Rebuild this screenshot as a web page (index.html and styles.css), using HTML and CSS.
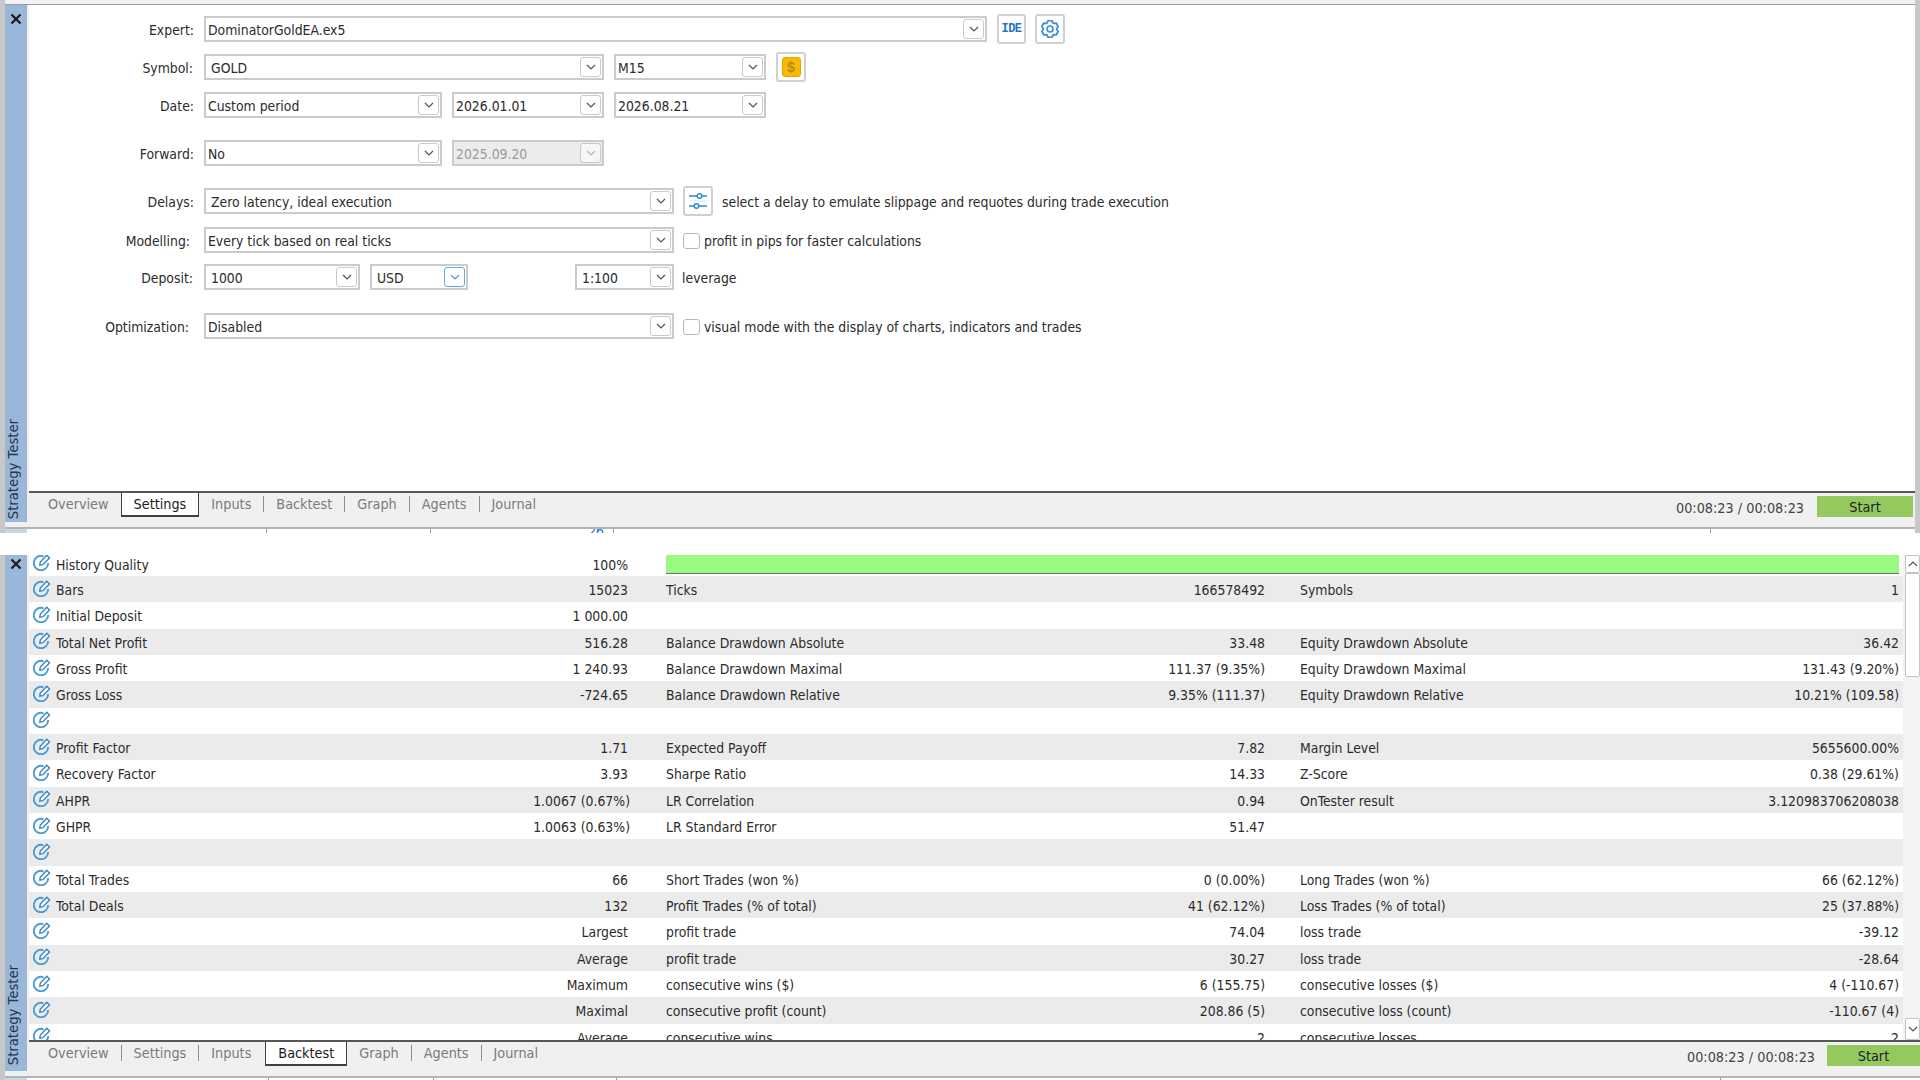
FILE: index.html
```html
<!DOCTYPE html>
<html lang="en">
<head>
    <meta charset="UTF-8">
    <title>Strategy Tester</title>
    <link rel="stylesheet" href="styles.css">
</head>
<body>

    <!-- Shared icons -->
    <svg class="icon-defs" width="0" height="0">
        <symbol id="chevron" viewBox="0 0 10 6"><path d="M1 1l4 4 4-4" fill="none" stroke="currentColor" stroke-width="1.2"/></symbol>
        <symbol id="close" viewBox="0 0 12 12"><path d="M1.5 1.5l9 9M10.5 1.5l-9 9" fill="none" stroke="#1a1a1a" stroke-width="2.2"/></symbol>
        <symbol id="edit" viewBox="0 0 18 18">
            <path d="M10.5 3.3A7.2 7.2 0 1 0 15.2 10" fill="none" stroke="#4a9ad6" stroke-width="1.9"/>
            <path d="M6.8 12.2l.5-3.2L13.8 2.2l2.7 2.7-6.6 6.8z" fill="#fff" stroke="#3585c6" stroke-width="1.4"/>
        </symbol>
    </svg>

    <!-- Settings panel -->
    <section class="tester tester-top">
        <div class="top-strip"></div>
        <div class="tester-body">
            <div class="side">
                <div class="side-blue">
                    <svg class="close-icon"><use href="#close"/></svg>
                    <span class="side-title">Strategy Tester</span>
                </div>
            </div>
            <div class="content">
                <div class="form">
                    <div class="form-row">
                        <label class="form-label">Expert:</label>
                        <div class="combo w-expert"><span>DominatorGoldEA.ex5</span><i class="combo-btn"><svg><use href="#chevron"/></svg></i></div>
                        <button class="tool-btn tool-ide">IDE</button>
                        <button class="tool-btn tool-gear">
                            <svg width="18" height="18" viewBox="0 0 18 18"><path d="M7.09.72h3.82l1.34 2.65 2.96-.17 1.92 3.32L15.5 9l1.63 2.48-1.92 3.32-2.96-.17-1.34 2.65H7.09l-1.34-2.65-2.96.17-1.92-3.32L2.5 9 .87 6.52 2.79 3.2l2.96.17z" fill="#fff" stroke="#3f8fd2" stroke-width="1.8"/><circle cx="9" cy="9" r="3" fill="none" stroke="#3f8fd2" stroke-width="1.7"/></svg>
                        </button>
                    </div>
                    <div class="form-row">
                        <label class="form-label label-in-1">Symbol:</label>
                        <div class="combo combo-edit w-400"><span>GOLD</span><i class="combo-btn"><svg><use href="#chevron"/></svg></i></div>
                        <div class="combo w-152"><span>M15</span><i class="combo-btn"><svg><use href="#chevron"/></svg></i></div>
                        <button class="tool-btn tool-gold"><span class="gold-coin">$</span></button>
                    </div>
                    <div class="form-row">
                        <label class="form-label">Date:</label>
                        <div class="combo w-238"><span>Custom period</span><i class="combo-btn"><svg><use href="#chevron"/></svg></i></div>
                        <div class="combo w-152"><span>2026.01.01</span><i class="combo-btn"><svg><use href="#chevron"/></svg></i></div>
                        <div class="combo w-152"><span>2026.08.21</span><i class="combo-btn"><svg><use href="#chevron"/></svg></i></div>
                    </div>
                    <div class="form-row form-row-spaced">
                        <label class="form-label">Forward:</label>
                        <div class="combo w-238"><span>No</span><i class="combo-btn"><svg><use href="#chevron"/></svg></i></div>
                        <div class="combo combo-disabled w-152"><span>2025.09.20</span><i class="combo-btn"><svg><use href="#chevron"/></svg></i></div>
                    </div>
                    <div class="form-row form-row-spaced">
                        <label class="form-label">Delays:</label>
                        <div class="combo combo-edit w-470"><span>Zero latency, ideal execution</span><i class="combo-btn"><svg><use href="#chevron"/></svg></i></div>
                        <button class="tool-btn tool-delay">
                            <svg width="18" height="18" viewBox="0 0 18 18"><path d="M0 4h8M13 4h5M5 14H0M10 14h8" stroke="#2f8ad0" stroke-width="1.5"/><circle cx="10.5" cy="4" r="2.3" fill="#fff" stroke="#2f8ad0" stroke-width="1.5"/><circle cx="7.5" cy="14" r="2.3" fill="#fff" stroke="#2f8ad0" stroke-width="1.5"/><path d="M1 9h16" stroke="#cfe3f4"/></svg>
                        </button>
                        <span class="form-note">select a delay to emulate slippage and requotes during trade execution</span>
                    </div>
                    <div class="form-row form-row-modelling">
                        <label class="form-label label-in-4">Modelling:</label>
                        <div class="combo w-470"><span>Every tick based on real ticks</span><i class="combo-btn"><svg><use href="#chevron"/></svg></i></div>
                        <span class="check"><i class="check-box"></i>profit in pips for faster calculations</span>
                    </div>
                    <div class="form-row">
                        <label class="form-label label-in-1">Deposit:</label>
                        <div class="combo combo-edit w-156"><span>1000</span><i class="combo-btn"><svg><use href="#chevron"/></svg></i></div>
                        <div class="combo combo-usd combo-focus w-98"><span>USD</span><i class="combo-btn"><svg><use href="#chevron"/></svg></i></div>
                        <div class="combo combo-edit combo-leverage w-99"><span>1:100</span><i class="combo-btn"><svg><use href="#chevron"/></svg></i></div>
                        <span class="leverage-note">leverage</span>
                    </div>
                    <div class="form-row form-row-last">
                        <label class="form-label label-in-5">Optimization:</label>
                        <div class="combo w-470"><span>Disabled</span><i class="combo-btn"><svg><use href="#chevron"/></svg></i></div>
                        <span class="check"><i class="check-box"></i>visual mode with the display of charts, indicators and trades</span>
                    </div>
                </div>
                <div class="tabbar">
                    <div class="tabs">
                        <span class="tab">Overview</span>
                        <span class="tab tab-active">Settings</span>
                        <span class="tab">Inputs</span>
                        <i class="tab-sep"></i>
                        <span class="tab">Backtest</span>
                        <i class="tab-sep"></i>
                        <span class="tab">Graph</span>
                        <i class="tab-sep"></i>
                        <span class="tab">Agents</span>
                        <i class="tab-sep"></i>
                        <span class="tab">Journal</span>
                    </div>
                    <span class="timer">00:08:23 / 00:08:23</span>
                    <button class="start-btn">Start</button>
                </div>
            </div>
        </div>
        <div class="sliver">
            <i class="sliver-side"></i>
            <i class="sliver-cell"></i>
            <i class="sliver-cell"></i>
            <i class="sliver-cell"><b class="sliver-num">26</b></i>
            <i class="sliver-cell"></i>
        </div>
    </section>

    <!-- Backtest panel -->
    <section class="tester tester-bottom">
        <div class="tester-body">
            <div class="side">
                <div class="side-blue">
                    <svg class="close-icon"><use href="#close"/></svg>
                    <span class="side-title">Strategy Tester</span>
                </div>
            </div>
            <div class="content">
                <div class="report">
                    <div class="stats">
                        <div class="stat-row stat-row-first">
                            <svg class="edit-icon"><use href="#edit"/></svg>
                            <div class="cell"><span>History Quality</span><span>100%</span></div>
                            <div class="quality-wrap"><div class="quality-bar"></div></div>
                        </div>
                        <div class="stat-row">
                            <svg class="edit-icon"><use href="#edit"/></svg>
                            <div class="cell"><span>Bars</span><span>15023</span></div>
                            <div class="cell cell-2"><span>Ticks</span><span>166578492</span></div>
                            <div class="cell cell-3"><span>Symbols</span><span>1</span></div>
                        </div>
                        <div class="stat-row">
                            <svg class="edit-icon"><use href="#edit"/></svg>
                            <div class="cell"><span>Initial Deposit</span><span>1 000.00</span></div>
                        </div>
                        <div class="stat-row">
                            <svg class="edit-icon"><use href="#edit"/></svg>
                            <div class="cell"><span>Total Net Profit</span><span>516.28</span></div>
                            <div class="cell cell-2"><span>Balance Drawdown Absolute</span><span>33.48</span></div>
                            <div class="cell cell-3"><span>Equity Drawdown Absolute</span><span>36.42</span></div>
                        </div>
                        <div class="stat-row">
                            <svg class="edit-icon"><use href="#edit"/></svg>
                            <div class="cell"><span>Gross Profit</span><span>1 240.93</span></div>
                            <div class="cell cell-2"><span>Balance Drawdown Maximal</span><span>111.37 (9.35%)</span></div>
                            <div class="cell cell-3"><span>Equity Drawdown Maximal</span><span>131.43 (9.20%)</span></div>
                        </div>
                        <div class="stat-row">
                            <svg class="edit-icon"><use href="#edit"/></svg>
                            <div class="cell"><span>Gross Loss</span><span>-724.65</span></div>
                            <div class="cell cell-2"><span>Balance Drawdown Relative</span><span>9.35% (111.37)</span></div>
                            <div class="cell cell-3"><span>Equity Drawdown Relative</span><span>10.21% (109.58)</span></div>
                        </div>
                        <div class="stat-row">
                            <svg class="edit-icon"><use href="#edit"/></svg>
                        </div>
                        <div class="stat-row">
                            <svg class="edit-icon"><use href="#edit"/></svg>
                            <div class="cell"><span>Profit Factor</span><span>1.71</span></div>
                            <div class="cell cell-2"><span>Expected Payoff</span><span>7.82</span></div>
                            <div class="cell cell-3"><span>Margin Level</span><span>5655600.00%</span></div>
                        </div>
                        <div class="stat-row">
                            <svg class="edit-icon"><use href="#edit"/></svg>
                            <div class="cell"><span>Recovery Factor</span><span>3.93</span></div>
                            <div class="cell cell-2"><span>Sharpe Ratio</span><span>14.33</span></div>
                            <div class="cell cell-3"><span>Z-Score</span><span>0.38 (29.61%)</span></div>
                        </div>
                        <div class="stat-row">
                            <svg class="edit-icon"><use href="#edit"/></svg>
                            <div class="cell"><span>AHPR</span><span class="value-wide">1.0067 (0.67%)</span></div>
                            <div class="cell cell-2"><span>LR Correlation</span><span>0.94</span></div>
                            <div class="cell cell-3"><span>OnTester result</span><span>3.120983706208038</span></div>
                        </div>
                        <div class="stat-row">
                            <svg class="edit-icon"><use href="#edit"/></svg>
                            <div class="cell"><span>GHPR</span><span class="value-wide">1.0063 (0.63%)</span></div>
                            <div class="cell cell-2"><span>LR Standard Error</span><span>51.47</span></div>
                        </div>
                        <div class="stat-row">
                            <svg class="edit-icon"><use href="#edit"/></svg>
                        </div>
                        <div class="stat-row">
                            <svg class="edit-icon"><use href="#edit"/></svg>
                            <div class="cell"><span>Total Trades</span><span>66</span></div>
                            <div class="cell cell-2"><span>Short Trades (won %)</span><span>0 (0.00%)</span></div>
                            <div class="cell cell-3"><span>Long Trades (won %)</span><span>66 (62.12%)</span></div>
                        </div>
                        <div class="stat-row">
                            <svg class="edit-icon"><use href="#edit"/></svg>
                            <div class="cell"><span>Total Deals</span><span>132</span></div>
                            <div class="cell cell-2"><span>Profit Trades (% of total)</span><span>41 (62.12%)</span></div>
                            <div class="cell cell-3"><span>Loss Trades (% of total)</span><span>25 (37.88%)</span></div>
                        </div>
                        <div class="stat-row">
                            <svg class="edit-icon"><use href="#edit"/></svg>
                            <div class="cell"><span></span><span>Largest</span></div>
                            <div class="cell cell-2"><span>profit trade</span><span>74.04</span></div>
                            <div class="cell cell-3"><span>loss trade</span><span>-39.12</span></div>
                        </div>
                        <div class="stat-row">
                            <svg class="edit-icon"><use href="#edit"/></svg>
                            <div class="cell"><span></span><span>Average</span></div>
                            <div class="cell cell-2"><span>profit trade</span><span>30.27</span></div>
                            <div class="cell cell-3"><span>loss trade</span><span>-28.64</span></div>
                        </div>
                        <div class="stat-row">
                            <svg class="edit-icon"><use href="#edit"/></svg>
                            <div class="cell"><span></span><span>Maximum</span></div>
                            <div class="cell cell-2"><span>consecutive wins ($)</span><span>6 (155.75)</span></div>
                            <div class="cell cell-3"><span>consecutive losses ($)</span><span>4 (-110.67)</span></div>
                        </div>
                        <div class="stat-row">
                            <svg class="edit-icon"><use href="#edit"/></svg>
                            <div class="cell"><span></span><span>Maximal</span></div>
                            <div class="cell cell-2"><span>consecutive profit (count)</span><span>208.86 (5)</span></div>
                            <div class="cell cell-3"><span>consecutive loss (count)</span><span>-110.67 (4)</span></div>
                        </div>
                        <div class="stat-row">
                            <svg class="edit-icon"><use href="#edit"/></svg>
                            <div class="cell"><span></span><span>Average</span></div>
                            <div class="cell cell-2"><span>consecutive wins</span><span>2</span></div>
                            <div class="cell cell-3"><span>consecutive losses</span><span>2</span></div>
                        </div>
                    </div>
                    <div class="scrollbar">
                        <i class="scroll-btn scroll-up"><svg><use href="#chevron"/></svg></i>
                        <i class="scroll-thumb"></i>
                        <i class="scroll-track"></i>
                        <i class="scroll-btn scroll-down"><svg><use href="#chevron"/></svg></i>
                    </div>
                </div>
                <div class="tabbar">
                    <div class="tabs">
                        <span class="tab">Overview</span>
                        <i class="tab-sep"></i>
                        <span class="tab">Settings</span>
                        <i class="tab-sep"></i>
                        <span class="tab">Inputs</span>
                        <span class="tab tab-active">Backtest</span>
                        <span class="tab">Graph</span>
                        <i class="tab-sep"></i>
                        <span class="tab">Agents</span>
                        <i class="tab-sep"></i>
                        <span class="tab">Journal</span>
                    </div>
                    <span class="timer">00:08:23 / 00:08:23</span>
                    <button class="start-btn">Start</button>
                </div>
            </div>
        </div>
        <div class="sliver">
            <i class="sliver-side"></i>
            <i class="sliver-cell"></i>
            <i class="sliver-cell"></i>
            <i class="sliver-cell"></i>
            <i class="sliver-cell"></i>
        </div>
    </section>

</body>
</html>
```

FILE: styles.css
```css
body {
    margin: 0;
    height: 1080px;
    overflow: hidden;
    background-color: #ffffff;
    font-family: "DejaVu Sans Condensed", "DejaVu Sans", sans-serif;
    font-size: 13.85px;
    color: #2b2b2b;
}

.icon-defs {
    position: absolute;
}

i {
    font-style: normal;
}

/* Panels */
.tester {
    display: flex;
    flex-direction: column;
    border-left: 5px solid #c8c8c8;
}

.tester-top {
    height: 533px;
    border-right: 5px solid #c8c8c8;
}

.tester-bottom {
    height: 525px;
    margin-top: 22px;
}

.top-strip {
    height: 4px;
    background-color: #f2f2f2;
    border-bottom: 1px solid #9a9a9a;
}

.tester-body {
    flex: 1;
    display: flex;
    min-height: 0;
}

.side {
    width: 22px;
    flex-shrink: 0;
    display: flex;
    background-color: #f0f0f0;
    padding-bottom: 5px;
}

.side-blue {
    flex: 1;
    display: flex;
    flex-direction: column;
    align-items: center;
    justify-content: space-between;
    background-color: #9ab6d8;
    padding: 8px 0 3px;
}

.tester-bottom .side-blue {
    padding: 3px 0 6px;
}

.close-icon {
    width: 12px;
    height: 12px;
}

.side-title {
    writing-mode: vertical-rl;
    transform: rotate(180deg);
    margin-right: 5px;
    font-family: "DejaVu Sans", sans-serif;
    font-size: 13.2px;
    color: #24364d;
}

.content {
    flex: 1;
    min-width: 0;
    display: flex;
    flex-direction: column;
    border-left: 2px solid #f0f0f0;
}

/* Settings form */
.form {
    flex: 1;
    padding-top: 11px;
}

.form-row {
    display: flex;
    align-items: center;
    gap: 10px;
    height: 26px;
    margin-bottom: 12px;
}

.form-row-spaced {
    margin-top: 22px;
}

.form-row-modelling {
    margin-top: 13px;
    margin-bottom: 11px;
}

.form-row-last {
    margin-top: 23px;
}

.form-label {
    box-sizing: border-box;
    width: 165px;
    padding-top: 2px;
    text-align: right;
}

.label-in-1 { padding-right: 1px; }
.label-in-4 { padding-right: 4px; }
.label-in-5 { padding-right: 5px; }

.combo {
    box-sizing: border-box;
    display: flex;
    align-items: center;
    justify-content: space-between;
    height: 26px;
    padding-left: 2px;
    border: 2px solid #cbcbcb;
    background-color: #ffffff;
    white-space: nowrap;
}

.combo span {
    margin-top: 1px;
}

.combo-edit {
    padding-left: 5px;
}

.combo-usd {
    padding-left: 5px;
}

.combo-btn {
    box-sizing: border-box;
    display: flex;
    align-items: center;
    justify-content: center;
    width: 21px;
    height: 20px;
    margin-right: 1px;
    border: 1px solid #c9c9c9;
    border-radius: 3px;
    color: #555555;
}

.combo-btn svg {
    width: 10px;
    height: 6px;
}

.combo-disabled {
    background-color: #ececec;
    color: #9a9a9a;
}

.combo-disabled .combo-btn {
    background-color: #f6f6f6;
    color: #b5b5b5;
}

.combo-focus .combo-btn {
    border-color: #62aaf0;
    color: #4a98e6;
}

.combo-leverage {
    margin-left: 97px;
}

.w-expert { width: 783px; }
.w-470 { width: 470px; }
.w-400 { width: 400px; }
.w-238 { width: 238px; }
.w-156 { width: 156px; }
.w-152 { width: 152px; }
.w-99 { width: 99px; }
.w-98 { width: 98px; }

.tool-btn {
    box-sizing: border-box;
    display: flex;
    align-items: center;
    justify-content: center;
    padding: 0;
    width: 30px;
    height: 30px;
    flex-shrink: 0;
    background-color: #ffffff;
    border: 2px solid #d0d0d0;
    border-radius: 3px;
}

.tool-ide {
    width: 29px;
    font-family: "Liberation Mono", monospace;
    font-weight: bold;
    font-size: 12px;
    letter-spacing: -0.6px;
    color: #1f75c0;
}

.tool-gear {
    margin-left: -1px;
}

.tool-delay {
    margin-left: -1px;
}

.gold-coin {
    box-sizing: border-box;
    width: 19px;
    height: 20px;
    line-height: 18px;
    font-size: 14px;
    font-weight: bold;
    text-align: center;
    color: #b58a1c;
    background-color: #f8b900;
    border: 1px solid #e3a500;
    border-radius: 3px;
}

.form-note {
    margin-left: -1px;
    padding-top: 2px;
    white-space: nowrap;
}

.leverage-note {
    margin-left: -2px;
    padding-top: 2px;
}

.check {
    display: flex;
    align-items: center;
    gap: 4px;
    margin-left: -1px;
    padding-top: 2px;
    white-space: nowrap;
}

.check-box {
    box-sizing: border-box;
    width: 17px;
    height: 16px;
    border: 1px solid #b8b8b8;
    border-radius: 3px;
    background-color: #ffffff;
}

/* Tabs */
.tabbar {
    display: flex;
    align-items: flex-start;
    height: 36px;
    box-sizing: border-box;
    flex-shrink: 0;
    font-size: 14.3px;
    background-color: #f0f0f0;
    border-top: 2px solid #565656;
}

.tabs {
    display: flex;
    align-items: center;
    height: 22px;
    padding-left: 7px;
    flex: 1;
}

.tab {
    padding: 0 12px;
    color: #7a7a7a;
}

.tab-active {
    box-sizing: border-box;
    height: 24px;
    line-height: 22px;
    margin-top: 2px;
    background-color: #ffffff;
    color: #1c1c1c;
    border: 1px solid #3f3f3f;
    border-top: none;
    border-bottom: 2px solid #3f3f3f;
}

.tester-bottom .tab-active {
    margin-left: 2px;
}

.tab-sep {
    width: 1px;
    height: 16px;
    background-color: #8f8f8f;
}

.timer {
    margin-top: 6px;
    line-height: 18px;
    color: #444444;
    white-space: nowrap;
}

.start-btn {
    width: 96px;
    height: 21px;
    margin: 3px 2px 0 13px;
    padding: 0;
    font: inherit;
    color: #1f1f1f;
    background-color: #94c95f;
    border: none;
}

.tester-bottom .start-btn {
    width: 93px;
    margin-right: 0;
    margin-left: 12px;
}

/* Leftover row under each tab bar */
.sliver {
    display: grid;
    grid-template-columns: 22px 240px 164px 183px 1097px;
    height: 4px;
    flex-shrink: 0;
    border-top: 2px solid #b4b4b4;
}

.tester-bottom .sliver {
    grid-template-columns: 22px 242px 165px 183px 1104px;
    height: 2px;
}

.sliver-side {
    background-color: #c9d7e8;
}

.sliver-cell {
    position: relative;
    overflow: hidden;
    border-right: 1px solid #9a9a9a;
}

.sliver-num {
    position: absolute;
    right: 9px;
    top: -5px;
    font-weight: normal;
    line-height: 14px;
    color: #2f73c0;
}

/* Report table */
.report {
    flex: 1;
    min-height: 0;
    display: flex;
    justify-content: space-between;
    overflow: hidden;
    background-color: #f3f3f3;
}

.stats {
    width: 1874px;
    flex-shrink: 0;
}

.stat-row {
    display: grid;
    grid-template-columns: 27px 572px 637px 634px;
    align-items: center;
    height: 26.33px;
    background-color: #ffffff;
}

.stat-row:nth-child(even) {
    background-color: #ebebeb;
}

.stat-row-first {
    height: 21px;
}

.edit-icon {
    width: 18px;
    height: 18px;
    margin: -3px 0 0 4px;
}

.stat-row-first .edit-icon {
    margin-top: -7px;
}

.cell {
    display: flex;
    justify-content: space-between;
    padding-top: 2px;
    white-space: nowrap;
}

.stat-row-first .cell {
    padding-top: 0;
    margin-top: -2px;
}

.cell-2 {
    padding-left: 38px;
}

.cell-3 {
    padding-left: 35px;
}

.value-wide {
    margin-right: -2px;
}

.quality-wrap {
    grid-column: 3 / 5;
    align-self: start;
    padding-left: 38px;
}

.quality-bar {
    height: 18px;
    background-color: #98fb80;
    border-bottom: 1px solid #6f6f6f;
}

.scrollbar {
    width: 15px;
    flex-shrink: 0;
    display: flex;
    flex-direction: column;
}

.scroll-btn {
    box-sizing: border-box;
    display: flex;
    align-items: center;
    justify-content: center;
    flex-shrink: 0;
    background-color: #ffffff;
    border: 1px solid #c4c4c4;
    border-radius: 2px;
    color: #555555;
}

.scroll-btn svg {
    width: 10px;
    height: 6px;
}

.scroll-up {
    height: 18px;
}

.scroll-up svg {
    transform: rotate(180deg);
}

.scroll-down {
    height: 22px;
}

.scroll-thumb {
    box-sizing: border-box;
    height: 104px;
    flex-shrink: 0;
    background-color: #ffffff;
    border: 1px solid #c4c4c4;
    border-radius: 2px;
}

.scroll-track {
    flex: 1;
}
```
